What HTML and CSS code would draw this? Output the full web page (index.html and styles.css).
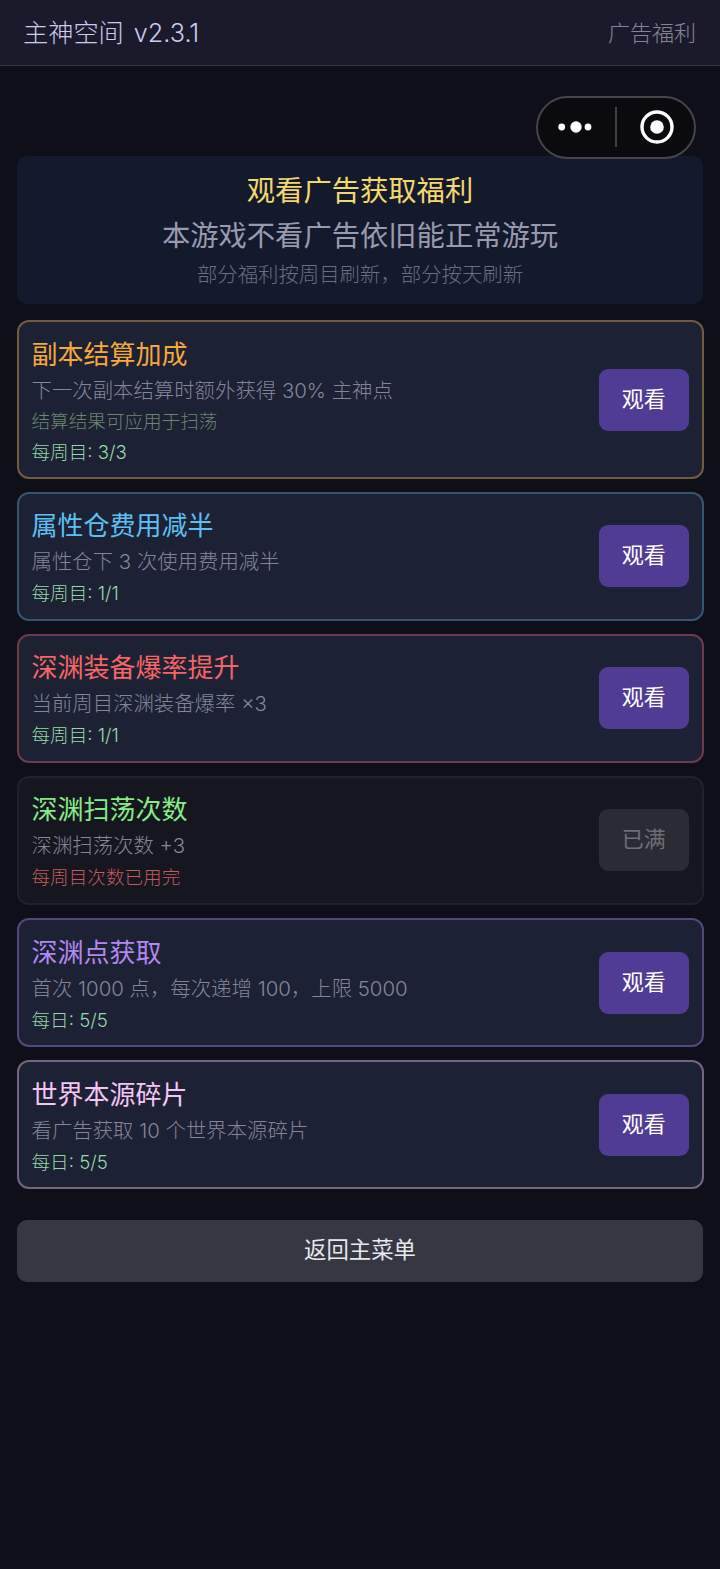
FILE: index.html
```html
<!DOCTYPE html>
<html>

	<head>
		<meta charset="UTF-8">
		<title>主神空间 广告福利</title>
		<link rel="stylesheet" href="styles.css">
	</head>

	<body>
		<div class="topbar">
			<span class="game-name">主神空间 v2.3.1</span>
			<span class="page-name">广告福利</span>
		</div>

		<div class="capsule">
			<svg class="capsule-more" width="36" height="14" viewBox="0 0 36 14">
				<circle cx="3.7" cy="7" r="3.4" fill="#fff" />
				<circle cx="18" cy="7" r="5.7" fill="#fff" />
				<circle cx="30" cy="7" r="3.4" fill="#fff" />
			</svg>
			<span class="capsule-line"></span>
			<svg class="capsule-close" width="34" height="34" viewBox="0 0 34 34">
				<circle cx="17" cy="17" r="15" fill="none" stroke="#fff" stroke-width="3.4" />
				<circle cx="17" cy="17" r="6.8" fill="#fff" />
			</svg>
		</div>

		<div class="content">
			<div class="banner">
				<div class="banner-title">观看广告获取福利</div>
				<div class="banner-main">本游戏不看广告依旧能正常游玩</div>
				<div class="banner-sub">部分福利按周目刷新，部分按天刷新</div>
			</div>

			<div class="card card-orange">
				<div class="card-info">
					<div class="card-title">副本结算加成</div>
					<div class="card-desc">下一次副本结算时额外获得 30% 主神点</div>
					<div class="card-note">结算结果可应用于扫荡</div>
					<div class="card-count">每周目: 3/3</div>
				</div>
				<div class="btn">观看</div>
			</div>

			<div class="card card-blue">
				<div class="card-info">
					<div class="card-title">属性仓费用减半</div>
					<div class="card-desc">属性仓下 3 次使用费用减半</div>
					<div class="card-count">每周目: 1/1</div>
				</div>
				<div class="btn">观看</div>
			</div>

			<div class="card card-red">
				<div class="card-info">
					<div class="card-title">深渊装备爆率提升</div>
					<div class="card-desc">当前周目深渊装备爆率 ×3</div>
					<div class="card-count">每周目: 1/1</div>
				</div>
				<div class="btn">观看</div>
			</div>

			<div class="card card-green card-off">
				<div class="card-info">
					<div class="card-title">深渊扫荡次数</div>
					<div class="card-desc">深渊扫荡次数 +3</div>
					<div class="card-count">每周目次数已用完</div>
				</div>
				<div class="btn">已满</div>
			</div>

			<div class="card card-purple">
				<div class="card-info">
					<div class="card-title">深渊点获取</div>
					<div class="card-desc">首次 1000 点，每次递增 100，上限 5000</div>
					<div class="card-count">每日: 5/5</div>
				</div>
				<div class="btn">观看</div>
			</div>

			<div class="card card-pink">
				<div class="card-info">
					<div class="card-title">世界本源碎片</div>
					<div class="card-desc">看广告获取 10 个世界本源碎片</div>
					<div class="card-count">每日: 5/5</div>
				</div>
				<div class="btn">观看</div>
			</div>

			<div class="back-btn">返回主菜单</div>
		</div>
	</body>

</html>
```

FILE: styles.css
```css
* {
	box-sizing: border-box;
}

html,
body {
	height: 100%;
}

body {
	margin: 0;
	position: relative;
	background-color: #0f0f1a;
	font-family: "Inter", "Noto Sans CJK SC", sans-serif;
}

.topbar {
	display: flex;
	justify-content: space-between;
	align-items: center;
	height: 66px;
	padding: 0 24px 4px 23px;
	background-color: #1a1a2a;
	border-bottom: 1px solid #33344a;
}

.game-name {
	font-size: 25.2px;
	font-weight: 300;
	word-spacing: 3px;
	color: #ccccee;
}

.page-name {
	font-size: 22px;
	font-weight: 300;
	color: #85859a;
}

.capsule {
	position: absolute;
	top: 95.5px;
	left: 535.5px;
	width: 160px;
	height: 63px;
	display: flex;
	align-items: center;
	background-color: #0a0a0f;
	border: 2px solid #44444c;
	border-radius: 32px;
}

.capsule-more {
	margin-left: 20.5px;
}

.capsule-line {
	width: 2px;
	height: 40px;
	margin-left: 20.5px;
	background-color: #3f3f46;
}

.capsule-close {
	margin-left: 23px;
}

.content {
	padding: 90px 16.5px 0;
}

.banner {
	height: 148px;
	padding-top: 16px;
	margin: 0 0.5px 16px;
	text-align: center;
	background-color: #131a2c;
	border-radius: 10px;
}

.banner-title {
	height: 38px;
	line-height: 38px;
	font-size: 28.3px;
	color: #f5d76e;
}

.banner-main {
	height: 46px;
	line-height: 46px;
	margin-top: 3px;
	font-size: 28.3px;
	color: #9a9aae;
}

.banner-sub {
	height: 32px;
	line-height: 32px;
	font-size: 20.4px;
	font-weight: 300;
	color: #6c6d80;
}

.card {
	display: flex;
	justify-content: space-between;
	align-items: center;
	padding: 12px 13px;
	margin-bottom: 13px;
	background-color: #1c2133;
	border: 2px solid #333;
	border-radius: 12px;
}

.card-info {
	margin: 1px 0 -1px;
}

.card-title {
	height: 38px;
	line-height: 38px;
	font-size: 26px;
}

.card-desc {
	height: 34px;
	line-height: 34px;
	font-size: 20.4px;
	font-weight: 300;
	color: #85859a;
}

.card-note {
	height: 30px;
	line-height: 26px;
	font-size: 18.6px;
	font-weight: 300;
	color: #68886f;
}

.card-count {
	height: 29px;
	line-height: 29px;
	font-size: 18.6px;
	font-weight: 300;
	color: #93dba6;
}

.btn {
	width: 89.6px;
	height: 62px;
	line-height: 60px;
	margin-bottom: 1px;
	text-align: center;
	font-size: 22px;
	color: #fff;
	background-color: #503c94;
	border-radius: 9px;
}

.card-orange .card-info,
.card-purple .card-info,
.card-pink .card-info {
	margin: 2px 0 -2px;
}

.card-purple .btn,
.card-pink .btn {
	margin: 0;
}

.card-orange {
	border-color: #6f5c3a;
}

.card-orange .btn {
	margin: 1px 0 0;
}

.card-orange .card-title {
	color: #f5a83c;
}

.card-blue {
	border-color: #36566f;
}

.card-blue .card-title {
	color: #5cc0f5;
}

.card-red {
	border-color: #703a48;
}

.card-red .card-title {
	color: #f56565;
}

.card-off {
	background-color: #15161f;
	border-color: #20212b;
}

.card-off .card-title {
	color: #85ec85;
}

.card-off .card-count {
	color: #c45a5a;
}

.card-off .btn {
	color: #6e6e76;
	background-color: #2a2b33;
}

.card-purple {
	border-color: #54487a;
}

.card-purple .card-title {
	color: #b388f0;
}

.card-pink {
	border-color: #75647f;
}

.card-pink .card-title {
	color: #f5c6f5;
}

.back-btn {
	height: 62px;
	line-height: 60px;
	margin: 31px 0.5px 0;
	text-align: center;
	font-size: 22.4px;
	color: #e8e8ee;
	background-color: #353842;
	border-radius: 10px;
}
```
